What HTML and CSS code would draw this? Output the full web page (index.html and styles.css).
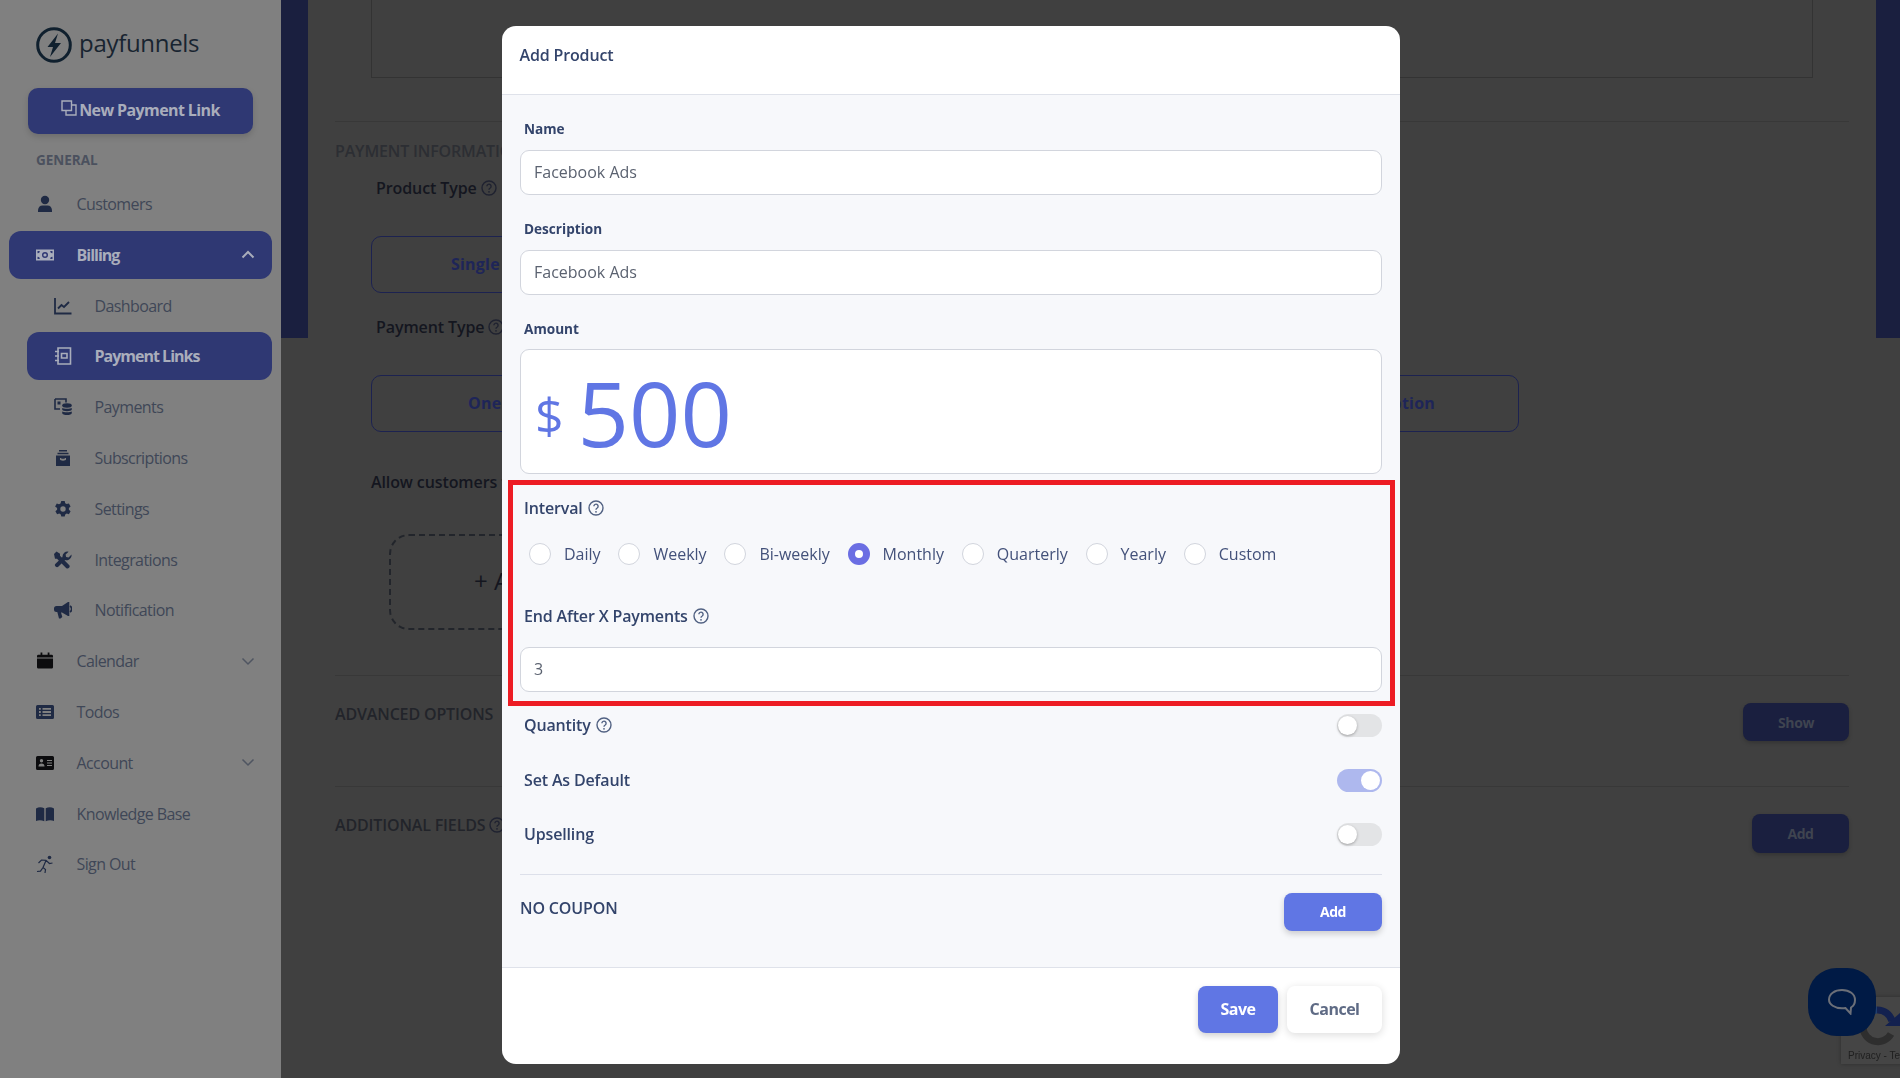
FILE: index.html
```html
<!DOCTYPE html>
<html lang="en">
<head>
    <meta charset="UTF-8">
    <meta name="viewport" content="width=device-width, initial-scale=1.0">
    <title>Add Product</title>
    <link rel="stylesheet" href="styles.css">
</head>
<body>
    <svg class="sprite" width="0" height="0">
        <symbol id="i-help" viewBox="0 0 16 16">
            <circle cx="8" cy="8" r="7" fill="none" stroke="currentColor" stroke-width="1.4"/>
            <path d="M5.900 6.300a2.100 2.100 0 1 1 3.300 1.700c-.8.500-1.200.9-1.200 1.700" fill="none" stroke="currentColor" stroke-width="1.400"/>
            <circle cx="8" cy="11.800" r=".9" fill="currentColor"/>
        </symbol>
        <symbol id="i-user" viewBox="0 0 18 18">
            <circle cx="9" cy="5" r="4.200"/>
            <path d="M2 17v-1.700C2 12.400 4 10.400 6.500 10.400h5c2.500 0 4.500 2 4.500 4.900V17z"/>
        </symbol>
        <symbol id="i-bill" viewBox="0 0 18 18">
            <path fill-rule="evenodd" d="M0 3.500h18v11H0zM9 6a3 3 0 1 0 0 6 3 3 0 0 0 0-6zM1.500 5v2.200A2 2 0 0 0 3.700 5zM16.500 5h-2.200a2 2 0 0 0 2.200 2.200zM1.500 13h2.200a2 2 0 0 0-2.200-2.200zM16.500 13v-2.200a2 2 0 0 0-2.200 2.200z"/>
            <circle cx="9" cy="9" r="1.600"/>
        </symbol>
        <symbol id="i-chart" viewBox="0 0 18 18">
            <path d="M1 1v15.500h16.500M4 11.500l3.500-3.500 2.500 2 5-5" fill="none" stroke="currentColor" stroke-width="1.800"/>
        </symbol>
        <symbol id="i-notebook" viewBox="0 0 18 18">
            <path d="M4 1h12.500v16H4zM7.500 6.500h5.500v4.500H7.500zM1 4.500h4M1 9h4M1 13.500h4" fill="none" stroke="currentColor" stroke-width="1.600"/>
        </symbol>
        <symbol id="i-payments" viewBox="0 0 18 18">
            <path d="M1 1h11v3.500M1 1v10h5" fill="none" stroke="currentColor" stroke-width="1.600"/>
            <path d="M3.500 3.500h3v3h-3z"/>
            <ellipse cx="13" cy="7.500" rx="4.800" ry="2.200"/>
            <path d="M8.200 10c1 1.100 8.600 1.100 9.600 0v1.600c0 2.200-9.600 2.200-9.600 0zM8.200 13.500c1 1.100 8.600 1.100 9.600 0v1.500c0 2.700-9.600 2.700-9.600 0z"/>
        </symbol>
        <symbol id="i-archive" viewBox="0 0 18 18">
            <path fill-rule="evenodd" d="M2 6.500h14V17H2zM6 9v1.500c0 1.500 6 1.500 6 0V9h-1.300v.8H7.300V9z"/>
            <path d="M3.500 3.800h11v1.500h-11zM5 1h8v1.500H5z"/>
        </symbol>
        <symbol id="i-cog" viewBox="0 0 18 18">
            <path fill-rule="evenodd" d="M7.300 1h3.400l.5 2.200 1.500.9 2.200-.7 1.700 3-1.700 1.500v1.800l1.700 1.500-1.700 3-2.200-.7-1.500.9-.5 2.200H7.300l-.5-2.200-1.500-.9-2.200.7-1.700-3 1.700-1.500V8.100L1.100 6.600l1.700-3 2.200.7 1.500-.9zM9 6.300a2.700 2.700 0 1 0 0 5.400 2.700 2.700 0 0 0 0-5.400z"/>
        </symbol>
        <symbol id="i-tools" viewBox="0 0 18 18">
            <path d="M2.500.5l3.500 2.300v2l8.600 8.600a2.200 2.200 0 1 1-3 3L3 7.700H1L0 3z"/>
            <path d="M17.500 3.500a5 5 0 0 1-6.500 5.500L4.500 15.500a2 2 0 0 1-3-2.800L8.500 6a5 5 0 0 1 6.100-5.300l-3 2.800.5 2.500 2.500.5z"/>
        </symbol>
        <symbol id="i-bullhorn" viewBox="0 0 18 18">
            <path d="M0 7.500a2.500 2.500 0 0 1 2.500-2.500H8l6-4h1.300v14H14l-6-3.500H7l1.300 4.500-1.800 1.500H5L3.300 11H2.500A2.500 2.500 0 0 1 0 8.500z"/>
            <path d="M16 5a3.500 3.500 0 0 1 0 6" fill="none" stroke="currentColor" stroke-width="1.800"/>
        </symbol>
        <symbol id="i-calendar" viewBox="0 0 18 18">
            <path d="M4 0h2v2.500h6V0h2v2.500h2.500A1.500 1.500 0 0 1 18 4v1.500H0V4a1.500 1.500 0 0 1 1.500-1.500H4zM0 6.500h18v10a1.500 1.500 0 0 1-1.500 1.500h-15A1.500 1.500 0 0 1 0 16.500z" transform="translate(1 .6) scale(.89)"/>
        </symbol>
        <symbol id="i-list" viewBox="0 0 18 18">
            <path fill-rule="evenodd" d="M1.500 2h15A1.500 1.500 0 0 1 18 3.500v11a1.500 1.500 0 0 1-1.500 1.500h-15A1.500 1.500 0 0 1 0 14.500v-11A1.500 1.500 0 0 1 1.500 2zM3 5v1.800h1.800V5zM6.500 5v1.800H15V5zM3 8.100v1.800h1.800V8.100zM6.500 8.100v1.800H15V8.100zM3 11.200V13h1.800v-1.800zM6.500 11.200V13H15v-1.800z"/>
        </symbol>
        <symbol id="i-idcard" viewBox="0 0 18 18">
            <path fill-rule="evenodd" d="M1.500 2h15A1.500 1.500 0 0 1 18 3.500v11a1.500 1.500 0 0 1-1.500 1.500h-15A1.500 1.500 0 0 1 0 14.500v-11A1.500 1.500 0 0 1 1.500 2zM5.500 5a1.700 1.700 0 1 0 0 3.400 1.700 1.700 0 0 0 0-3.400zM2.500 12.500h6c0-2-1-3-3-3s-3 1-3 3zM11 6v1.100h5V6zM11 8.500v1.100h5V8.500zM11 11v1.100h5V11z"/>
        </symbol>
        <symbol id="i-book" viewBox="0 0 18 18">
            <path d="M0 3.500C2.500 2 5.500 2 8.300 3.300v13C5.500 15 2.500 15 0 16zM18 3.500C15.500 2 12.500 2 9.700 3.300v13c2.800-1.300 5.800-1.300 8.300-.3z"/>
        </symbol>
        <symbol id="i-run" viewBox="0 0 18 18">
            <circle cx="13.500" cy="2.500" r="1.800"/>
            <path d="M1 16.500l3.500-.3 2.500-3.700 2.500 2-.5 3.500M2.500 8l3-3 4.500.3 3.500 3.200 3-.5M10 5.500L7 12.500" fill="none" stroke="currentColor" stroke-width="1.200"/>
        </symbol>
        <symbol id="i-copy" viewBox="0 0 16 16">
            <path d="M1 1h9.500v9.500H1zM5 10.500V15h10V5h-4.500" fill="none" stroke="currentColor" stroke-width="1.400"/>
        </symbol>
        <symbol id="i-up" viewBox="0 0 14 9">
            <path d="M1.500 7.500L7 2l5.500 5.500" fill="none" stroke="currentColor" stroke-width="2"/>
        </symbol>
        <symbol id="i-down" viewBox="0 0 14 9">
            <path d="M1.500 1.500L7 7l5.500-5.500" fill="none" stroke="currentColor" stroke-width="1.500"/>
        </symbol>
    </svg>

    <div class="page">
        <!-- Sidebar -->
        <aside class="sidebar">
            <div class="logo">
                <svg class="logo-mark" viewBox="0 0 36 36">
                    <circle cx="18" cy="18" r="16.300" fill="none" stroke="currentColor" stroke-width="3"/>
                    <path d="M22 6.500L11.500 20h5.500l-3 10 11-14h-6z" fill="currentColor"/>
                </svg>
                <span class="logo-text">payfunnels</span>
            </div>
            <button class="new-link"><svg class="new-link-icon"><use href="#i-copy"/></svg>New Payment Link</button>
            <div class="nav-title">GENERAL</div>
            <nav>
                <a class="nav-item"><svg class="nav-icon"><use href="#i-user"/></svg>Customers</a>
                <a class="nav-item active"><svg class="nav-icon"><use href="#i-bill"/></svg>Billing<svg class="chevron strong"><use href="#i-up"/></svg></a>
                <a class="nav-item sub"><svg class="nav-icon"><use href="#i-chart"/></svg>Dashboard</a>
                <a class="nav-item sub active"><svg class="nav-icon"><use href="#i-notebook"/></svg>Payment Links</a>
                <a class="nav-item sub"><svg class="nav-icon"><use href="#i-payments"/></svg>Payments</a>
                <a class="nav-item sub"><svg class="nav-icon"><use href="#i-archive"/></svg>Subscriptions</a>
                <a class="nav-item sub"><svg class="nav-icon"><use href="#i-cog"/></svg>Settings</a>
                <a class="nav-item sub"><svg class="nav-icon"><use href="#i-tools"/></svg>Integrations</a>
                <a class="nav-item sub"><svg class="nav-icon"><use href="#i-bullhorn"/></svg>Notification</a>
                <a class="nav-item"><svg class="nav-icon black"><use href="#i-calendar"/></svg>Calendar<svg class="chevron"><use href="#i-down"/></svg></a>
                <a class="nav-item"><svg class="nav-icon"><use href="#i-list"/></svg>Todos</a>
                <a class="nav-item"><svg class="nav-icon black"><use href="#i-idcard"/></svg>Account<svg class="chevron"><use href="#i-down"/></svg></a>
                <a class="nav-item"><svg class="nav-icon"><use href="#i-book"/></svg>Knowledge Base</a>
                <a class="nav-item"><svg class="nav-icon"><use href="#i-run"/></svg>Sign Out</a>
            </nav>
        </aside>

        <!-- Page behind the modal -->
        <main class="content">
            <div class="preview-box"></div>
            <div class="rule first"></div>
            <h3 class="section-title">PAYMENT INFORMATION</h3>
            <div class="field-title">Product Type <svg class="help"><use href="#i-help"/></svg></div>
            <div class="choice single"><span>Single Product</span></div>
            <div class="field-title second">Payment Type <svg class="help"><use href="#i-help"/></svg></div>
            <div class="choice wide"><span>One Time</span><span>Subscription</span></div>
            <div class="allow">Allow customers to</div>
            <div class="dashed">+ Add</div>
            <div class="rule third"></div>
            <div class="section-row">
                <h3 class="section-title flat">ADVANCED OPTIONS</h3>
                <button class="dark-btn show">Show</button>
            </div>
            <div class="rule fourth"></div>
            <div class="section-row last">
                <h3 class="section-title flat">ADDITIONAL FIELDS <svg class="help"><use href="#i-help"/></svg></h3>
                <button class="dark-btn add">Add</button>
            </div>
        </main>
    </div>

    <!-- Modal -->
    <div class="modal">
        <div class="modal-header">Add Product</div>
        <div class="modal-body">
            <label class="small-label">Name</label>
            <input class="text-input" type="text" value="Facebook Ads">
            <label class="small-label spaced">Description</label>
            <input class="text-input" type="text" value="Facebook Ads">
            <label class="small-label spaced">Amount</label>
            <div class="amount"><span class="currency">$</span><span class="amount-value">500</span></div>

            <div class="label interval-label">Interval <svg class="help"><use href="#i-help"/></svg></div>
            <div class="radios">
                <label class="radio-item"><span class="radio"></span>Daily</label>
                <label class="radio-item"><span class="radio"></span>Weekly</label>
                <label class="radio-item"><span class="radio"></span>Bi-weekly</label>
                <label class="radio-item"><span class="radio checked"></span>Monthly</label>
                <label class="radio-item"><span class="radio"></span>Quarterly</label>
                <label class="radio-item"><span class="radio"></span>Yearly</label>
                <label class="radio-item"><span class="radio"></span>Custom</label>
            </div>
            <div class="label end-label">End After X Payments <svg class="help"><use href="#i-help"/></svg></div>
            <input class="text-input" type="text" value="3">

            <div class="toggle-row first-toggle"><span class="label">Quantity <svg class="help"><use href="#i-help"/></svg></span><span class="toggle"></span></div>
            <div class="toggle-row second-toggle"><span class="label">Set As Default</span><span class="toggle on"></span></div>
            <div class="toggle-row"><span class="label">Upselling</span><span class="toggle"></span></div>
            <div class="modal-rule"></div>
            <div class="coupon-row">
                <span class="coupon">NO COUPON</span>
                <button class="btn-primary small">Add</button>
            </div>
        </div>
        <div class="modal-footer">
            <button class="btn-primary save">Save</button>
            <button class="btn-cancel">Cancel</button>
        </div>
        <!-- Red annotation frame -->
        <div class="highlight"></div>
    </div>

    <!-- reCAPTCHA badge and chat button -->
    <div class="recaptcha">
        <svg class="recaptcha-logo" viewBox="0 0 44 44">
            <path d="M7 25a15 15 0 0 0 28 6" fill="none" stroke="#2e2e2e" stroke-width="7"/>
            <path d="M2 25l9-5v9z" fill="#2e2e2e"/>
            <path d="M21 7a15 15 0 0 1 15 11" fill="none" stroke="#13214f" stroke-width="7"/>
            <path d="M44 10v13H29z" fill="#13214f"/>
            <path d="M21 3.500v7a12 12 0 0 0-8 4l-5-5a19 19 0 0 1 13-6z" fill="#1f3f6e"/>
        </svg>
        <span class="recaptcha-text">Privacy - Terms</span>
    </div>
    <div class="chat">
        <svg viewBox="0 0 28 26" width="28" height="26">
            <path d="M14 1c7.500 0 13 4 13 10 0 3.500-1.500 6-4 7.500l-.5 6-5-5.500c-1 .2-2.300.3-3.500.3C6.500 19.300 1 15.500 1 10.500 1 5 6.500 1 14 1z" fill="none" stroke="#6b6f78" stroke-width="2"/>
        </svg>
    </div>
</body>
</html>
```

FILE: styles.css
```css
:root {
    --sidebar-bg: #808080;
    --page-bg: #404040;
    --navy-dim: #1a1f3f;
    --active-bg: #2f3873;
    --active-text: #a9adbb;
    --nav-text: #3f4757;
    --icon-dim: #1f2a44;
    --primary: #6076e4;
    --label: #33446b;
    --border: #d2d5dd;
}

* {
    box-sizing: border-box;
}

body {
    margin: 0;
    height: 100vh;
    overflow: hidden;
    font-family: "Open Sans", sans-serif;
    font-size: 16px;
    background-color: var(--page-bg);
}

button {
    font-family: inherit;
    border: none;
    cursor: pointer;
}

.sprite {
    position: absolute;
}

.page {
    display: flex;
    height: 100vh;
}

/* Sidebar */
.sidebar {
    width: 281px;
    flex-shrink: 0;
    background-color: var(--sidebar-bg);
}

.logo {
    display: flex;
    align-items: center;
    height: 36px;
    margin: 27px 0 25px 36px;
    color: #10202e;
}

.logo-mark {
    width: 36px;
    height: 36px;
}

.logo-text {
    margin: 0 0 5px 7px;
    font-size: 24px;
    letter-spacing: -0.3px;
    color: #182430;
}

.new-link {
    display: flex;
    align-items: center;
    justify-content: center;
    width: 225px;
    height: 46px;
    margin-left: 28px;
    padding-bottom: 3px;
    border-radius: 10px;
    background-color: var(--active-bg);
    color: var(--active-text);
    font-size: 16px;
    font-weight: 700;
    letter-spacing: -0.6px;
    box-shadow: 0 3px 6px rgba(0, 0, 0, 0.15);
}

.new-link-icon {
    width: 16px;
    height: 16px;
    margin: 0 2px 4px 0;
}

.nav-title {
    margin: 16px 0 10px 36px;
    height: 20px;
    line-height: 20px;
    font-size: 13.5px;
    font-weight: 700;
    color: #4b515e;
}

.nav-item {
    display: flex;
    align-items: center;
    height: 48px;
    margin: 0 9px 2.8px;
    padding-left: 27px;
    width: 263px;
    border-radius: 12px;
    color: var(--nav-text);
    letter-spacing: -0.6px;
}

.nav-icon {
    width: 18px;
    height: 18px;
    margin-right: 22.5px;
    flex-shrink: 0;
    fill: var(--icon-dim);
    color: var(--icon-dim);
}

.nav-icon.black {
    fill: #0c0c0e;
    color: #0c0c0e;
}

.nav-item.sub {
    width: 245px;
    margin-left: 27px;
    padding-left: 27px;
}

.nav-item.active {
    background-color: var(--active-bg);
    color: var(--active-text);
    font-weight: 700;
    letter-spacing: -1px;
}

.nav-item.active .nav-icon {
    fill: var(--active-text);
    color: var(--active-text);
}

.chevron {
    width: 14px;
    height: 9px;
    margin-left: auto;
    margin-right: 17px;
    color: #4f5561;
}

.chevron.strong {
    color: var(--active-text);
}

/* Page behind the modal */
.content {
    flex: 1;
    padding: 0 51px 0 54px;
    background:
        linear-gradient(var(--navy-dim), var(--navy-dim)) left top / 27px 338px no-repeat,
        linear-gradient(var(--navy-dim), var(--navy-dim)) right top / 24px 338px no-repeat,
        var(--page-bg);
    color: #14161f;
}

.preview-box {
    width: 1442px;
    height: 78px;
    margin-left: 36px;
    border: 1px solid #333333;
    border-top: none;
}

.rule {
    height: 1px;
    background-color: #383838;
}

.rule.first {
    margin-top: 43px;
}

.rule.third {
    margin-top: 45px;
}

.rule.fourth {
    margin-top: 45px;
}

.section-title {
    margin: 18px 0 0;
    height: 22px;
    line-height: 22px;
    font-size: 16px;
    font-weight: 600;
    letter-spacing: -0.15px;
    color: #2c2e33;
}

.section-title.flat {
    margin: 0;
    color: #22242a;
}

.field-title {
    display: flex;
    align-items: center;
    gap: 4px;
    height: 22px;
    margin: 15px 0 0 41px;
    font-weight: 600;
    letter-spacing: -0.1px;
}

.field-title.second {
    margin-top: 23px;
}

.help {
    width: 16px;
    height: 16px;
    vertical-align: -2px;
    color: #516182;
}

.content .help {
    color: #1f2230;
}

.choice {
    display: flex;
    justify-content: space-between;
    align-items: center;
    height: 57px;
    margin: 37px 0 0 36px;
    padding: 0 83px 2px 96px;
    border: 1px solid #1c2250;
    border-radius: 10px;
    color: #1e2558;
    font-weight: 700;
    letter-spacing: 0.2px;
}

.choice.single {
    width: 600px;
    padding-left: 79px;
}

.choice.wide {
    width: 1148px;
}

.allow {
    height: 22px;
    margin: 39px 0 0 36px;
    font-weight: 600;
    letter-spacing: -0.1px;
}

.dashed {
    display: flex;
    align-items: center;
    width: 300px;
    height: 96px;
    margin: 41px 0 0 54px;
    padding: 0 0 3px 83px;
    border: 2px dashed #22252b;
    border-radius: 20px;
    font-size: 24px;
}

.section-row {
    display: flex;
    justify-content: space-between;
    align-items: flex-start;
    margin-top: 27px;
}

.dark-btn {
    border-radius: 8px;
    background-color: var(--navy-dim);
    color: #3f4450;
    font-size: 14px;
    font-weight: 700;
    letter-spacing: -0.4px;
    box-shadow: 0 2px 4px rgba(0, 0, 0, 0.2);
}

.dark-btn.show {
    width: 106px;
    height: 38px;
}

.dark-btn.add {
    width: 97px;
    height: 39px;
}

/* Modal */
.modal {
    position: fixed;
    left: 502px;
    top: 26px;
    width: 898px;
    height: 1038px;
    display: flex;
    flex-direction: column;
    border-radius: 14px;
    background-color: white;
    overflow: hidden;
}

.modal-header {
    height: 69px;
    padding: 18px 17.5px 0;
    line-height: 22px;
    font-weight: 600;
    letter-spacing: -0.15px;
    color: var(--label);
    border-bottom: 1px solid #dfe2ea;
}

.modal-body {
    flex: 1;
    padding: 24px 18px 0;
    background-color: #f7f8fb;
}

.small-label {
    display: block;
    height: 20px;
    margin-bottom: 11px;
    padding-left: 4px;
    line-height: 20px;
    font-size: 13.6px;
    font-weight: 700;
    color: var(--label);
}

.small-label.spaced {
    margin-top: 24px;
}

.text-input {
    display: block;
    width: 100%;
    height: 45px;
    padding: 0 13px 2px;
    border: 1px solid var(--border);
    border-radius: 9px;
    background-color: white;
    font-family: inherit;
    font-size: 16px;
    color: #5b6270;
    outline: none;
}

.small-label + .amount {
    margin-top: -1px;
}

.amount {
    display: flex;
    align-items: center;
    height: 125px;
    padding-left: 14px;
    border: 1px solid var(--border);
    border-radius: 9px;
    background-color: white;
    color: var(--primary);
}

.currency {
    margin: 6px 14px 0 0;
    font-size: 50px;
}

.amount-value {
    font-size: 90px;
    line-height: 1;
}

.label {
    display: flex;
    align-items: center;
    gap: 5px;
    height: 22px;
    padding-left: 4px;
    font-weight: 600;
    letter-spacing: -0.15px;
    color: var(--label);
}

.interval-label {
    margin-top: 23px;
}

.radios {
    display: flex;
    gap: 17.8px;
    height: 24px;
    margin-top: 23px;
    padding-left: 9px;
}

.radio-item {
    display: flex;
    align-items: center;
    gap: 13px;
    color: #43517a;
}

.radio {
    width: 22px;
    height: 22px;
    border: 1px solid var(--border);
    border-radius: 50%;
    background-color: white;
}

.radio.checked {
    border: 7px solid #6b6ee3;
}

.end-label {
    margin: 39px 0 20px;
}

.toggle-row {
    display: flex;
    justify-content: space-between;
    align-items: center;
    height: 22px;
    margin-top: 32px;
}

.first-toggle {
    margin-top: 22px;
}

.second-toggle {
    margin-top: 33px;
}

.toggle {
    position: relative;
    width: 45px;
    height: 23px;
    border-radius: 12px;
    background-color: #e3e4e6;
}

.toggle::after {
    content: "";
    position: absolute;
    left: 1px;
    top: 2px;
    width: 19px;
    height: 19px;
    border-radius: 50%;
    background-color: white;
    box-shadow: 0 1px 3px rgba(0, 0, 0, 0.3);
}

.toggle.on {
    background-color: #aeb8ee;
}

.toggle.on::after {
    left: 24px;
    box-shadow: none;
}

.modal-rule {
    height: 1px;
    margin-top: 29px;
    background-color: #dde0ea;
}

.coupon-row {
    display: flex;
    justify-content: space-between;
    align-items: flex-start;
    margin-top: 18px;
}

.coupon {
    padding-top: 4px;
    line-height: 22px;
    font-weight: 600;
    letter-spacing: -0.15px;
    color: var(--label);
}

.btn-primary {
    border-radius: 8px;
    background-color: var(--primary);
    color: white;
    font-weight: 700;
    box-shadow: 0 3px 6px rgba(0, 0, 0, 0.18);
}

.btn-primary.small {
    width: 98px;
    height: 38px;
    padding-bottom: 2px;
    font-size: 14px;
    letter-spacing: -0.4px;
}

.modal-footer {
    display: flex;
    justify-content: flex-end;
    gap: 9px;
    height: 97px;
    padding: 18px 18px 0;
    border-top: 1px solid #dfe2ea;
}

.btn-primary.save {
    width: 80px;
    height: 47px;
    padding-bottom: 2px;
    font-size: 16px;
    letter-spacing: -0.5px;
}

.btn-cancel {
    width: 95px;
    height: 47px;
    padding-bottom: 2px;
    border-radius: 8px;
    background-color: white;
    color: #5f6b85;
    font-size: 16px;
    font-weight: 700;
    letter-spacing: -0.5px;
    box-shadow: 0 2px 8px rgba(0, 0, 0, 0.14);
}

.highlight {
    position: absolute;
    left: 6px;
    top: 454px;
    width: 887px;
    height: 226px;
    border: 5px solid #ed1c24;
    pointer-events: none;
}

/* Floating widgets */
.recaptcha {
    position: fixed;
    left: 1841px;
    top: 997px;
    width: 100px;
    height: 67px;
    overflow: hidden;
    background-color: #454545;
    box-shadow: 0 0 4px rgba(0, 0, 0, 0.3);
}

.recaptcha-logo {
    display: block;
    width: 44px;
    height: 44px;
    margin: 6px 0 0 15px;
}

.recaptcha-text {
    display: block;
    margin-top: 2px;
    padding-left: 7px;
    font-family: "Liberation Sans", sans-serif;
    font-size: 10px;
    line-height: 14px;
    white-space: nowrap;
    color: #1f1f1f;
}

.chat {
    position: fixed;
    left: 1808px;
    top: 968px;
    width: 68px;
    height: 68px;
    display: flex;
    align-items: center;
    justify-content: center;
    border-radius: 42%;
    background-color: #001a45;
}
```
